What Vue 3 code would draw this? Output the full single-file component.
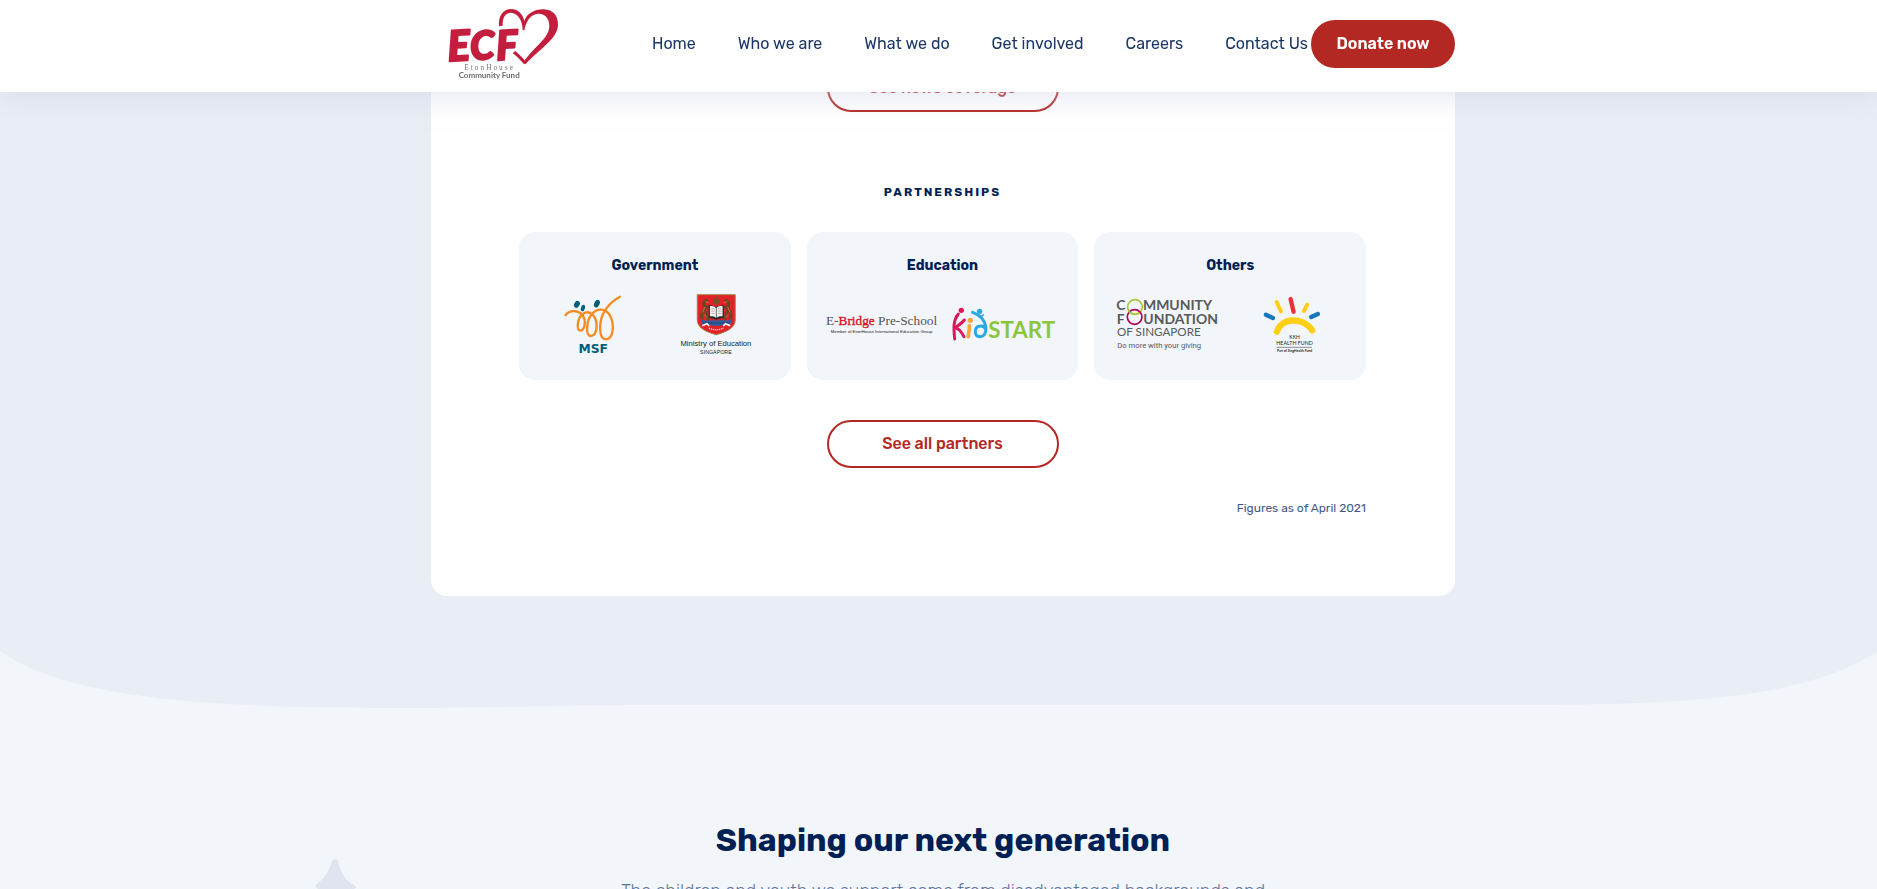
<script setup>
const links = ['Home', 'Who we are', 'What we do', 'Get involved', 'Careers', 'Contact Us']
</script>

<template>
  <div class="page">
    <header class="header">
      <div class="container header-row">
        <a class="logo" href="#" aria-label="EtonHouse Community Fund">
          <svg viewBox="48 15 345 228" width="115" height="76" aria-hidden="true">
            <g class="ecf">
              <text x="55" y="181" font-size="126" transform="rotate(-3 55 181)">E</text>
              <text x="122" y="177" font-size="118" transform="rotate(-3 122 177)">C</text>
              <text x="200" y="178" font-size="122" transform="rotate(-3 200 178)">F</text>
            </g>
            <path
              fill="#c41e3f"
              d="M207 76C204 45 220 24 243 24C263 24 278 38 283 60C290 38 315 24 341 25C370 26 385 45 384 72C382 115 330 142 286 190L282 189C270 176 260 166 248 156L256 150C268 160 276 168 284 178C316 134 357 112 358 75C358 52 345 37 325 38C302 40 288 60 283 88L278 88C278 56 262 36 243 35C226 35 217 50 218 74Z"
            />
            <text class="eton" x="103" y="206" font-size="22">EtonHouse</text>
            <text class="fund" x="86" y="232" font-size="24">Community Fund</text>
          </svg>
        </a>
        <nav class="nav" aria-label="Main">
          <a v-for="link in links" :key="link" href="#">{{ link }}</a>
        </nav>
        <a class="donate" href="#">Donate now</a>
      </div>
    </header>

    <main>
      <section class="impact">
        <div class="container panel">
          <a class="pill" href="#">See news coverage</a>
          <h2 class="eyebrow">Partnerships</h2>
          <div class="partners">
            <article class="partner">
              <h3>Government</h3>
              <div class="logos">
                <svg viewBox="63 195 372 204" role="img" aria-label="MSF">
                  <path
                    fill="none"
                    stroke="#f68b1f"
                    stroke-width="7"
                    stroke-linecap="round"
                    d="M167 270C178 255 203 254 216 268C232 288 223 317 211 317C198 316 202 277 220 266C239 253 259 274 260 299C261 323 252 334 242 333C226 331 229 286 246 267C263 247 289 250 301 273C314 299 311 341 289 343C265 344 268 292 279 268C291 242 311 225 330 215"
                  />
                  <g fill="#00607a">
                    <ellipse cx="201" cy="238" rx="8" ry="11" transform="rotate(28 201 238)" />
                    <ellipse cx="219" cy="249" rx="6" ry="10" transform="rotate(15 219 249)" />
                    <ellipse cx="261" cy="236" rx="8" ry="12" transform="rotate(25 261 236)" />
                  </g>
                  <text class="msf" x="250" y="383" font-size="37" text-anchor="middle">MSF</text>
                </svg>
                <svg viewBox="435 195 372 204" role="img" aria-label="Ministry of Education Singapore">
                  <path
                    fill="#e32129"
                    stroke="#a5803e"
                    stroke-width="3"
                    d="M562 209H676V285C676 306 655 320 619 329C583 320 562 306 562 285Z"
                  />
                  <g fill="none" stroke="#6d4722" stroke-width="9" stroke-linecap="round">
                    <path d="M590 226C576 232 581 244 591 246C579 254 573 267 576 280" />
                    <path d="M648 226C662 232 657 244 647 246C659 254 665 267 662 280" />
                    <path d="M587 262L594 282M651 262L644 282" />
                  </g>
                  <g fill="none" stroke="#c39a50" stroke-width="2">
                    <path d="M586 229L597 234M585 246L578 262M652 229L641 234M653 246L660 262M584 268L590 278M654 268L648 278" />
                  </g>
                  <path fill="#765326" d="M609 233C609 225 614 223 619 213C624 223 630 225 629 234L619 240Z" />
                  <path fill="#302b2b" d="M596 239L619 245L642 239V278L619 284L596 278Z" />
                  <path fill="#f2f2ef" d="M600 243C610 242 615 245 618 249V278C612 274 607 273 600 274ZM638 243C628 242 623 245 620 249V278C626 274 631 273 638 274Z" />
                  <path stroke="#999" stroke-width="2" d="M604 251H614M604 258H614M604 265H614M624 251H634M624 258H634M624 265H634" />
                  <path fill="#315b9b" d="M573 281C588 292 603 282 619 287C637 281 651 292 665 281V294C651 305 636 297 619 304C601 297 588 305 573 294Z" />
                  <path stroke="#18365f" stroke-width="3" stroke-dasharray="4 3" d="M580 294H658" />
                  <path fill="none" stroke="#fff" stroke-width="5" d="M577 302L591 296L598 303M661 302L647 296L640 303" />
                  <path fill="none" stroke="#f4c8bd" stroke-width="4" stroke-dasharray="4 2" d="M597 309C608 316 629 316 641 309" />
                  <text class="moe" x="618" y="364" font-size="23" text-anchor="middle">Ministry of Education</text>
                  <text class="moe" x="618" y="387" font-size="16" text-anchor="middle">SINGAPORE</text>
                </svg>
              </div>
            </article>

            <article class="partner">
              <h3>Education</h3>
              <div class="logos">
                <svg viewBox="54 195 372 204" role="img" aria-label="E-Bridge Pre-School">
                  <text class="bridge" x="242" y="301" font-size="40" text-anchor="middle">E-<tspan>Bridge</tspan> Pre-School</text>
                  <text class="moe" x="242" y="323" font-size="13" text-anchor="middle">Member of EtonHouse International Education Group</text>
                </svg>
                <svg viewBox="426 195 372 204" role="img" aria-label="KidStart">
                  <g fill="none" stroke-linecap="round" stroke-linejoin="round">
                    <path stroke="#dc185b" stroke-width="9" d="M475 267C459 287 461 309 464 342M493 285C484 297 475 300 466 308C477 311 486 324 492 335" />
                    <path stroke="#f9a63a" stroke-width="11" d="M508 302C511 313 504 324 505 335" />
                    <path stroke="#2aa9e0" stroke-width="9" d="M518 262C535 268 555 282 558 308C559 325 551 336 540 335C520 334 524 307 537 304C548 301 555 307 558 315" />
                    <path stroke="#2aa9e0" stroke-width="5" d="M535 273C542 277 546 274 550 270" />
                  </g>
                  <circle cx="484" cy="256" r="8" fill="#dc185b" />
                  <circle cx="511" cy="286" r="8" fill="#f9a63a" />
                  <circle cx="539" cy="259" r="8" fill="#2aa9e0" />
                  <text class="start" x="565" y="338" font-size="67">START</text>
                </svg>
              </div>
            </article>

            <article class="partner">
              <h3>Others</h3>
              <div class="logos">
                <svg viewBox="63 195 372 204" role="img" aria-label="Community Foundation of Singapore">
                  <g class="cfs">
                    <text x="94" y="256" font-size="42">C</text>
                    <text x="174" y="256" font-size="42">MMUNITY</text>
                    <text x="95" y="297" font-size="42">F</text>
                    <text x="175" y="297" font-size="42">UNDATION</text>
                  </g>
                  <g fill="none" stroke-width="5">
                    <circle cx="150" cy="246" r="22" stroke="#a6c83c" />
                    <circle cx="149" cy="276" r="22" stroke="#b20058" />
                    <path stroke="#a6c83c" d="M130 257C139 269 153 271 164 263" />
                  </g>
                  <text class="cfs-sub" x="96" y="334" font-size="35">OF SINGAPORE</text>
                  <text class="giving" x="97" y="368" font-size="23">Do more with your giving</text>
                </svg>
                <svg viewBox="435 195 372 204" role="img" aria-label="KKH Health Fund">
                  <g fill="none" stroke-linecap="round">
                    <path stroke="#ffce17" stroke-width="19" d="M576 320C588 278 653 274 682 316" />
                    <path stroke="#1679bf" stroke-width="13" d="M543 269L564 279M679 276L699 267" />
                    <path stroke="#ffce17" stroke-width="12" d="M575 231L588 259M667 239L657 258" />
                    <path stroke="#ee2e38" stroke-width="13" d="M617 222L626 260" />
                  </g>
                  <g class="kkh" text-anchor="middle">
                    <text x="629" y="343" font-size="15">KKH</text>
                    <text x="629" y="360" font-size="16">HEALTH FUND</text>
                    <text class="strong" x="629" y="380" font-size="10">Part of SingHealth Fund</text>
                  </g>
                  <path stroke="#555" stroke-width="2" d="M575 367H681" />
                </svg>
              </div>
            </article>
          </div>
          <a class="pill" href="#">See all partners</a>
          <p class="note">Figures as of April 2021</p>
        </div>
      </section>

      <svg class="wave" viewBox="0 0 1877 60" preserveAspectRatio="none" aria-hidden="true">
        <path fill="#e9edf6" d="M0 0V3C64 48 190 60 400 60C500 60 540 57 660 57H1500C1690 57 1804 50 1877 4V0Z" />
      </svg>

      <section class="stories">
        <svg class="spark" viewBox="0 0 42 56" aria-hidden="true">
          <path d="M17 3Q20 -1 23 3C26 16 31 23 39 27Q43 29 39 31C31 35 26 42 23 53Q20 57 17 53C14 42 9 36 2 30Q-1 28 2 26C9 20 14 14 17 3Z" />
        </svg>
        <h2>Shaping our next generation</h2>
        <p>The children and youth we support come from disadvantaged backgrounds and</p>
      </section>
    </main>
  </div>
</template>

<style>
body {
  margin: 0;
  background: #f2f5fa;
}
</style>

<style scoped>
.page {
  height: 100vh;
  overflow: hidden;
  font-family: Rubik, Roboto, sans-serif;
  color: #001f54;
  background: #f2f5fa;
}
a {
  color: inherit;
  text-decoration: none;
}
h2,
h3,
p {
  margin: 0;
}
.container {
  box-sizing: border-box;
  width: 100%;
  max-width: 1024px;
  margin: 0 auto;
}
.header {
  position: sticky;
  top: 0;
  z-index: 2;
  padding: 0 0 4px 9px;
  background: #fff;
  box-shadow: 0 6px 24px rgba(207, 212, 232, 0.5);
}
.header-row {
  display: flex;
  align-items: center;
  height: 88px;
}
.logo {
  margin-left: 15px;
}
.logo svg {
  display: block;
}
.ecf {
  font-family: Lato, sans-serif;
  font-weight: 900;
  font-style: italic;
  fill: #c41e3f;
  stroke: #c41e3f;
  stroke-width: 6px;
  stroke-linejoin: round;
}
.eton {
  font-family: "Liberation Serif", serif;
  letter-spacing: 6px;
  fill: #777;
}
.fund {
  font-family: Lato, sans-serif;
  font-weight: 700;
  fill: #6d6e70;
}
.nav {
  display: flex;
  gap: 42px;
  margin-left: auto;
  font-size: 16px;
  line-height: 24px;
  color: #1c3766;
  white-space: nowrap;
}
.donate {
  width: 144px;
  margin-left: 3px;
  border-radius: 24px;
  background: #b32822;
  color: #fff;
  font-size: 16px;
  font-weight: 600;
  line-height: 48px;
  text-align: center;
}
.impact {
  margin-top: -28px;
  padding: 0 0 52px 9px;
  background: #e9edf6;
}
.panel {
  display: flex;
  flex-direction: column;
  align-items: center;
  padding: 0 89px 80px 88px;
  border-radius: 0 0 16px 16px;
  background: #fff;
}
.pill {
  box-sizing: border-box;
  width: 232px;
  border: 2px solid #b32822;
  border-radius: 24px;
  color: #b32822;
  font-size: 16px;
  font-weight: 500;
  line-height: 44px;
  text-align: center;
}
.eyebrow {
  margin: 72px 0 32px;
  font-size: 12px;
  font-weight: 700;
  line-height: 16px;
  letter-spacing: 2px;
  text-transform: uppercase;
}
.partners {
  display: grid;
  grid-template-columns: repeat(3, 1fr);
  gap: 16px;
  width: 100%;
  margin-bottom: 40px;
}
.partner {
  padding: 24px 12px 22px;
  border-radius: 16px;
  background: #f2f5fa;
}
.partner h3 {
  margin-bottom: 14px;
  font-size: 14px;
  font-weight: 700;
  line-height: 20px;
  text-align: center;
}
.logos {
  display: grid;
  grid-template-columns: 1fr 1fr;
}
.logos svg {
  display: block;
  width: 100%;
  height: 68px;
}
.msf {
  font-family: "DejaVu Sans", sans-serif;
  font-weight: 700;
  fill: #00607a;
}
.moe {
  font-family: "Liberation Sans", sans-serif;
  fill: #222;
}
.bridge {
  font-family: "Liberation Serif", serif;
  fill: #555;
}
.bridge tspan {
  fill: #d8101c;
  stroke: #d8101c;
  stroke-width: 1px;
}
.start {
  font-family: Lato, sans-serif;
  font-weight: 700;
  fill: #8cc63f;
}
.cfs {
  font-family: Lato, sans-serif;
  font-weight: 700;
  fill: #58595b;
}
.cfs-sub {
  font-family: Lato, sans-serif;
  fill: #58595b;
}
.giving {
  font-family: Roboto, sans-serif;
  fill: #58595b;
}
.kkh {
  font-family: Lato, sans-serif;
  fill: #222;
}
.strong {
  font-weight: 700;
}
.note {
  align-self: flex-end;
  margin-top: 32px;
  color: #405a85;
  font-size: 12px;
  line-height: 16px;
}
.wave {
  display: block;
  width: 100%;
  height: 60px;
}
.stories {
  position: relative;
  padding: 108px 0 80px 9px;
  text-align: center;
}
.stories h2 {
  font-size: 32px;
  font-weight: 700;
  line-height: 48px;
}
.stories p {
  margin-top: 13px;
  color: #60749a;
  font-size: 18px;
  font-weight: 300;
  line-height: 28px;
}
.spark {
  position: absolute;
  left: 315px;
  top: 150px;
  width: 42px;
  height: 56px;
  fill: #e0e4f0;
}
</style>
